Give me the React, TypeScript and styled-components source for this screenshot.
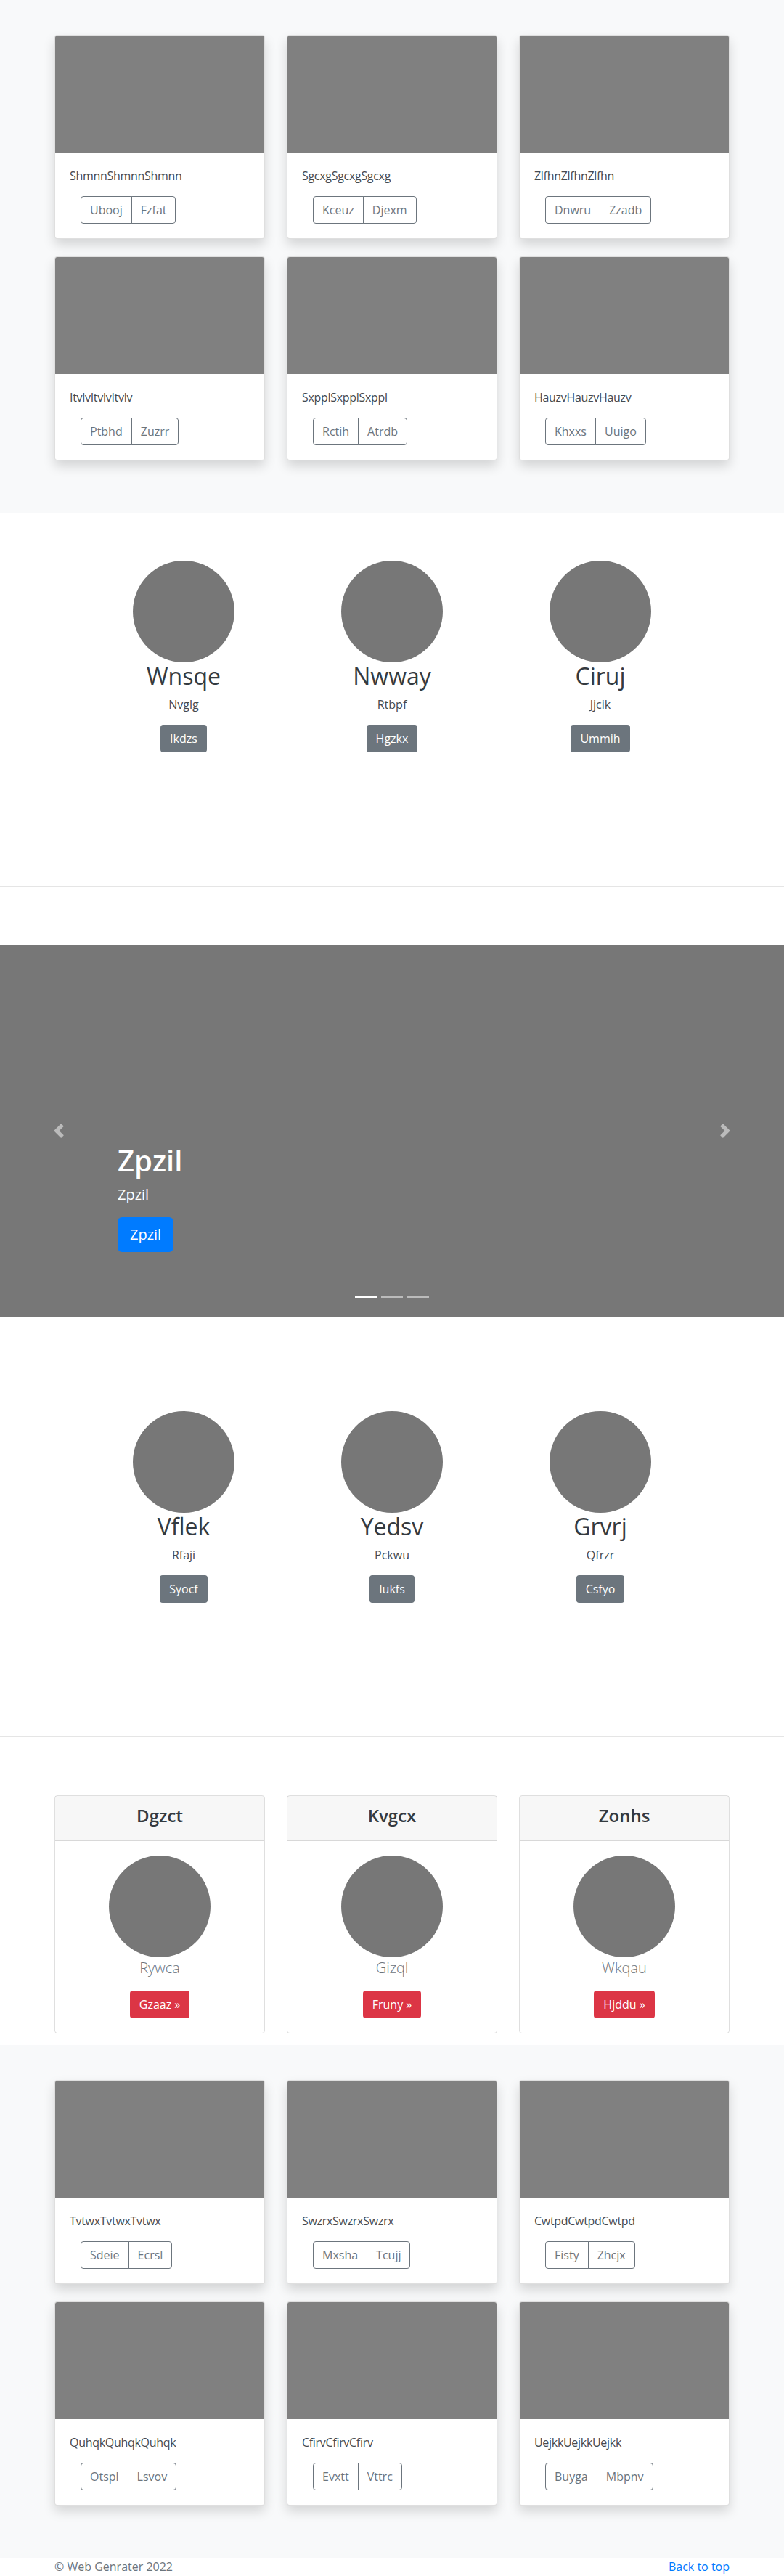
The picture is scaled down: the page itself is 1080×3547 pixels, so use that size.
import styled, { createGlobalStyle } from 'styled-components';

type AlbumItem = { title: string; actions: [string, string] };
type Feature = { name: string; sub: string; action: string };
type Plan = { name: string; sub: string; action: string };

const topAlbum: AlbumItem[] = [
	{ title: 'ShmnnShmnnShmnn', actions: ['Ubooj', 'Fzfat'] },
	{ title: 'SgcxgSgcxgSgcxg', actions: ['Kceuz', 'Djexm'] },
	{ title: 'ZlfhnZlfhnZlfhn', actions: ['Dnwru', 'Zzadb'] },
	{ title: 'ItvlvItvlvItvlv', actions: ['Ptbhd', 'Zuzrr'] },
	{ title: 'SxpplSxpplSxppl', actions: ['Rctih', 'Atrdb'] },
	{ title: 'HauzvHauzvHauzv', actions: ['Khxxs', 'Uuigo'] },
];

const bottomAlbum: AlbumItem[] = [
	{ title: 'TvtwxTvtwxTvtwx', actions: ['Sdeie', 'Ecrsl'] },
	{ title: 'SwzrxSwzrxSwzrx', actions: ['Mxsha', 'Tcujj'] },
	{ title: 'CwtpdCwtpdCwtpd', actions: ['Fisty', 'Zhcjx'] },
	{ title: 'QuhqkQuhqkQuhqk', actions: ['Otspl', 'Lsvov'] },
	{ title: 'CfirvCfirvCfirv', actions: ['Evxtt', 'Vttrc'] },
	{ title: 'UejkkUejkkUejkk', actions: ['Buyga', 'Mbpnv'] },
];

const featuresA: Feature[] = [
	{ name: 'Wnsqe', sub: 'Nvglg', action: 'Ikdzs' },
	{ name: 'Nwway', sub: 'Rtbpf', action: 'Hgzkx' },
	{ name: 'Ciruj', sub: 'Jjcik', action: 'Ummih' },
];

const featuresB: Feature[] = [
	{ name: 'Vflek', sub: 'Rfaji', action: 'Syocf' },
	{ name: 'Yedsv', sub: 'Pckwu', action: 'Iukfs' },
	{ name: 'Grvrj', sub: 'Qfrzr', action: 'Csfyo' },
];

const plans: Plan[] = [
	{ name: 'Dgzct', sub: 'Rywca', action: 'Gzaaz »' },
	{ name: 'Kvgcx', sub: 'Gizql', action: 'Fruny »' },
	{ name: 'Zonhs', sub: 'Wkqau', action: 'Hjddu »' },
];

const GlobalStyle = createGlobalStyle`
	* { box-sizing: border-box; }
	body {
		margin: 0;
		font-family: "Open Sans", "Noto Sans", "Liberation Sans", sans-serif;
		font-size: 16px;
		line-height: 1.5;
		color: #212529;
		background: #fff;
	}
`;

const Container = styled.div`
	width: 930px;
	margin: 0 auto;
`;

const AlbumSection = styled.section`
	background: #f8f9fa;
	padding: 48px 0;
`;

const CardGrid = styled.div`
	display: grid;
	grid-template-columns: repeat(3, 290px);
	column-gap: 30px;
`;

const ShadowCard = styled.div`
	background: #fff;
	border: 1px solid rgba(0, 0, 0, 0.125);
	border-radius: 4px;
	overflow: hidden;
	margin-bottom: 24px;
	box-shadow: 0 8px 16px rgba(0, 0, 0, 0.15);
`;

const Thumb = styled.div`
	height: 161px;
	background: #808080;
`;

const CardBody = styled.div`
	padding: 20px;
`;

const CardText = styled.p`
	margin: 0 0 16px;
	letter-spacing: -0.3px;
	color: #464a4f;
`;

const BtnGroup = styled.div`
	display: inline-flex;
	margin-left: 15px;
`;

const OutlineBtn = styled.button`
	font-family: inherit;
	font-size: 16px;
	line-height: 24px;
	padding: 6px 12px;
	color: #6c757d;
	background: transparent;
	border: 1px solid #6c757d;
	border-radius: 0;
	&:first-child { border-radius: 4px 0 0 4px; }
	&:last-child { border-radius: 0 4px 4px 0; margin-left: -1px; }
`;

const Marketing = styled.section`
	padding: 66px 0 64px;
`;

const FeatureRow = styled.div`
	display: grid;
	grid-template-columns: repeat(3, 287px);
	justify-content: center;
`;

const FeatureCol = styled.div`
	text-align: center;
	padding-bottom: 40px;
`;

const Circle = styled.div`
	width: 140px;
	height: 140px;
	border-radius: 50%;
	background: #777;
	margin: 0 auto;
`;

const FeatureName = styled.h2`
	margin: 0 0 8px;
	font-size: 32px;
	font-weight: 400;
	line-height: 38px;
	color: #343a40;
`;

const FeatureSub = styled.p`
	margin: 0 0 16px;
	color: #464a4f;
`;

const SolidBtn = styled.button<{ $tone: 'secondary' | 'danger' | 'primary'; $large?: boolean }>`
	font-family: inherit;
	font-size: ${(p) => (p.$large ? 20 : 16)}px;
	line-height: 1.5;
	padding: ${(p) => (p.$large ? '8px 16px' : '6px 12px')};
	color: #fff;
	border-radius: ${(p) => (p.$large ? 6 : 4)}px;
	border: 1px solid transparent;
	background: ${(p) => (p.$tone === 'danger' ? '#dc3545' : p.$tone === 'primary' ? '#007bff' : '#6c757d')};
`;

const Divider = styled.hr`
	margin: 80px 0;
	border: 0;
	border-top: 1px solid rgba(0, 0, 0, 0.1);
`;

const Carousel = styled.div`
	position: relative;
	height: 512px;
	background: #777;
	margin-bottom: 64px;
	overflow: hidden;
`;

const Caption = styled.div`
	position: absolute;
	left: 15%;
	right: 15%;
	bottom: 69px;
	padding-bottom: 20px;
	color: #fff;
`;

const CaptionTitle = styled.h1`
	margin: 0 0 8px;
	font-size: 40px;
	font-weight: 600;
	line-height: 48px;
`;

const CaptionText = styled.p`
	margin: 0 0 16px;
	font-size: 20px;
	line-height: 30px;
`;

const Lead = styled.p`
	margin: 0 0 16px;
	font-size: 20px;
	font-weight: 300;
	line-height: 30px;
	color: #6c757d;
`;

const Control = styled.div<{ $side: 'left' | 'right' }>`
	position: absolute;
	top: 0;
	bottom: 0;
	${(p) => p.$side}: 0;
	width: 15%;
	display: flex;
	align-items: center;
	justify-content: center;
	opacity: 0.5;
`;

const Indicators = styled.div`
	position: absolute;
	left: 50%;
	bottom: 26px;
	transform: translateX(-50%);
	display: flex;
`;

const Indicator = styled.span<{ $active?: boolean }>`
	display: block;
	width: 30px;
	height: 3px;
	margin: 0 3px;
	background: #fff;
	opacity: ${(p) => (p.$active ? 1 : 0.5)};
`;

const PriceCard = styled.div`
	border: 1px solid rgba(0, 0, 0, 0.125);
	border-radius: 4px;
	margin-bottom: 16px;
	text-align: center;
`;

const PriceHeader = styled.div`
	background: rgba(0, 0, 0, 0.03);
	border-bottom: 1px solid rgba(0, 0, 0, 0.125);
	padding: 12px 20px;
`;

const PriceTitle = styled.h4`
	margin: 0 0 8px;
	font-size: 24px;
	font-weight: 600;
	line-height: 29px;
	color: #343a40;
`;

const PriceBody = styled.div`
	padding: 20px;
`;

const Footer = styled.footer`
	color: #6c757d;
	padding-bottom: 3px;
`;

const FooterRow = styled.div`
	display: flex;
	justify-content: space-between;
`;

const FooterLink = styled.a`
	color: #007bff;
	text-decoration: none;
`;

function Chevron({ dir }: { dir: 'prev' | 'next' }) {
	const d = dir === 'prev'
		? 'M5.25 0l-4 4 4 4 1.5-1.5L4.25 4l2.5-2.5L5.25 0z'
		: 'M2.75 0l-1.5 1.5L3.75 4l-2.5 2.5L2.75 8l4-4-4-4z';
	return (
		<svg width="20" height="20" viewBox="0 0 8 8">
			<path d={d} fill="#fff" />
		</svg>
	);
}

function Album({ items }: { items: AlbumItem[] }) {
	return (
		<AlbumSection>
			<Container>
				<CardGrid>
					{items.map((item) => (
						<ShadowCard key={item.title}>
							<Thumb />
							<CardBody>
								<CardText>{item.title}</CardText>
								<BtnGroup>
									<OutlineBtn>{item.actions[0]}</OutlineBtn>
									<OutlineBtn>{item.actions[1]}</OutlineBtn>
								</BtnGroup>
							</CardBody>
						</ShadowCard>
					))}
				</CardGrid>
			</Container>
		</AlbumSection>
	);
}

function Features({ items }: { items: Feature[] }) {
	return (
		<Marketing>
			<FeatureRow>
				{items.map((f) => (
					<FeatureCol key={f.name}>
						<Circle />
						<FeatureName>{f.name}</FeatureName>
						<FeatureSub>{f.sub}</FeatureSub>
						<SolidBtn $tone="secondary">{f.action}</SolidBtn>
					</FeatureCol>
				))}
			</FeatureRow>
		</Marketing>
	);
}

function App() {
	return (
		<>
			<GlobalStyle />
			<Album items={topAlbum} />
			<Features items={featuresA} />
			<Divider />

			<Carousel>
				<Caption>
					<CaptionTitle>Zpzil</CaptionTitle>
					<CaptionText>Zpzil</CaptionText>
					<SolidBtn $tone="primary" $large>Zpzil</SolidBtn>
				</Caption>
				<Control $side="left"><Chevron dir="prev" /></Control>
				<Control $side="right"><Chevron dir="next" /></Control>
				<Indicators>
					<Indicator $active />
					<Indicator />
					<Indicator />
				</Indicators>
			</Carousel>

			<Features items={featuresB} />
			<Divider />

			<section>
				<Container>
					<CardGrid>
						{plans.map((p) => (
							<PriceCard key={p.name}>
								<PriceHeader>
									<PriceTitle>{p.name}</PriceTitle>
								</PriceHeader>
								<PriceBody>
									<Circle />
									<Lead>{p.sub}</Lead>
									<SolidBtn $tone="danger">{p.action}</SolidBtn>
								</PriceBody>
							</PriceCard>
						))}
					</CardGrid>
				</Container>
			</section>

			<Album items={bottomAlbum} />

			<Footer>
				<Container>
					<FooterRow>
						<span>© Web Genrater 2022</span>
						<FooterLink href="#">Back to top</FooterLink>
					</FooterRow>
				</Container>
			</Footer>
		</>
	);
}

export default App;
